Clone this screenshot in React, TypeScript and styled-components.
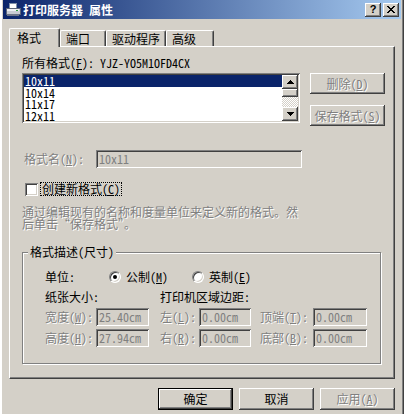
import React from "react";
import styled, { createGlobalStyle, css } from "styled-components";

const FONT = `"Noto Sans Mono CJK SC", "Noto Sans CJK SC", "DejaVu Sans Mono", monospace`;
const FACE = "#d4d0c8";

const GlobalStyle = createGlobalStyle`
  html, body { margin: 0; padding: 0; background: ${FACE}; }
  body { font: 12px/12px ${FONT}; color: #000; }
  * { box-sizing: border-box; }
`;

const raised = css`
  box-shadow: inset -1px -1px #404040, inset 1px 1px #fff, inset -2px -2px #808080;
`;
const sunken = css`
  box-shadow: inset 1px 1px #808080, inset -1px -1px #fff, inset 2px 2px #404040, inset -2px -2px ${FACE};
`;
const disabledText = css`
  color: #808080;
  text-shadow: 1px 1px 0 #fff;
`;

const Window = styled.div`
  width: 404px;
  height: 414px;
  padding: 0 3px;
  display: flex;
  flex-direction: column;
  background: ${FACE};
  box-shadow: inset 2px 0 #fff, inset -1px 0 #404040, inset -2px 0 #808080;
  overflow: hidden;
`;

const TitleBar = styled.div`
  height: 19px;
  display: flex;
  align-items: center;
  padding-left: 2px;
  background: linear-gradient(90deg, #0a246a, #a6caf0);
  color: #fff;
  font-weight: bold;
`;

const TitleText = styled.span`
  margin-left: 2px;
  line-height: 12px;
  white-space: pre;
`;

const CaptionGroup = styled.div`
  margin-left: auto;
  display: flex;
  gap: 2px;
  padding-right: 2px;
`;

const CaptionButton = styled.div`
  width: 16px;
  height: 14px;
  background: ${FACE};
  ${raised};
  display: flex;
  align-items: center;
  justify-content: center;
  color: #000;
  font: bold 11px/11px "Liberation Sans", Arial, sans-serif;
`;

const Body = styled.div`
  flex: 1;
  display: flex;
  flex-direction: column;
  padding: 9px 6px 0 6px;
`;

const TabStrip = styled.div`
  height: 18px;
  display: flex;
  align-items: flex-end;
  position: relative;
  z-index: 1;
`;

const Tab = styled.div<{ $w: number; $active?: boolean }>`
  width: ${(p) => p.$w}px;
  height: ${(p) => (p.$active ? 19 : 16)}px;
  margin-bottom: ${(p) => (p.$active ? -1 : 0)}px;
  padding: ${(p) => (p.$active ? 3 : 2)}px 0 0 ${(p) => (p.$active ? 7 : 5)}px;
  background: ${FACE};
  border-top: 1px solid #fff;
  border-left: 1px solid #fff;
  border-right: 1px solid #404040;
  border-top-left-radius: 2px;
  border-top-right-radius: 2px;
  box-shadow: inset -1px 0 #808080;
  white-space: nowrap;
`;

const Panel = styled.div`
  height: 333px;
  border-top: 1px solid #fff;
  border-left: 1px solid #fff;
  border-right: 1px solid #404040;
  border-bottom: 1px solid #404040;
  box-shadow: inset -1px -1px #808080;
  padding: 10px 0 0 12px;
  display: flex;
  flex-direction: column;
  align-items: flex-start;
`;

const Line = styled.div`
  height: 12px;
  line-height: 12px;
  white-space: pre;
`;

const ListRow = styled.div`
  display: flex;
  align-items: flex-start;
  margin-top: 4px;
`;

const ListBox = styled.div`
  width: 278px;
  height: 50px;
  padding: 2px;
  background: #fff;
  ${sunken};
  display: flex;
`;

const ListItems = styled.div`
  flex: 1;
  display: flex;
  flex-direction: column;
  overflow: hidden;
`;

const ListItem = styled.div<{ $selected?: boolean }>`
  height: 11.5px;
  flex: none;
  line-height: 11.5px;
  padding-left: 1px;
  background: ${(p) => (p.$selected ? "#0a246a" : "transparent")};
  color: ${(p) => (p.$selected ? "#fff" : "#000")};
`;

const ScrollBar = styled.div`
  width: 16px;
  display: flex;
  flex-direction: column;
`;

const ScrollButton = styled.div`
  height: 14px;
  background: ${FACE};
  ${raised};
  display: flex;
  align-items: center;
  justify-content: center;
`;

const ScrollThumb = styled.div`
  height: 8px;
  background: ${FACE};
  ${raised};
`;

const ScrollTrack = styled.div`
  flex: 1;
  background: repeating-conic-gradient(#fff 0 25%, ${FACE} 0 50%) 0 0 / 2px 2px;
`;

const SideButtons = styled.div`
  display: flex;
  flex-direction: column;
  gap: 11px;
  margin-left: 10px;
`;

const Button = styled.div<{ $w?: number; $h?: number; $default?: boolean; $disabled?: boolean }>`
  width: ${(p) => p.$w ?? 75}px;
  height: ${(p) => p.$h ?? 21}px;
  background: ${FACE};
  display: flex;
  align-items: center;
  justify-content: center;
  line-height: 12px;
  white-space: pre;
  ${(p) =>
    p.$default
      ? css`
          box-shadow: inset 0 0 0 1px #000, inset -2px -2px #404040, inset 2px 2px #fff,
            inset -3px -3px #808080;
        `
      : raised};
  ${(p) => p.$disabled && disabledText};
`;

const NameRow = styled.div`
  display: flex;
  align-items: center;
  margin-top: 24px;
`;

const FieldLabel = styled.div<{ $w: number; $ml?: number; $disabled?: boolean }>`
  width: ${(p) => p.$w}px;
  margin-left: ${(p) => p.$ml ?? 0}px;
  line-height: 12px;
  white-space: pre;
  ${(p) => p.$disabled && disabledText};
`;

const Field = styled.div<{ $w: number; $h?: number }>`
  width: ${(p) => p.$w}px;
  height: ${(p) => p.$h ?? 18}px;
  ${sunken};
  background: ${FACE};
  color: #808080;
  padding: 3px 0 0 3px;
  line-height: 12px;
  white-space: pre;
  overflow: hidden;
`;

const CheckRow = styled.div`
  display: flex;
  align-items: center;
  margin-top: 14px;
  padding-left: 3px;
`;

const CheckBox = styled.div`
  width: 13px;
  height: 13px;
  background: #fff;
  ${sunken};
`;

const FocusLabel = styled.div`
  margin-left: 2px;
  padding: 0 1px;
  border: 1px dotted #000;
  line-height: 12px;
  white-space: pre;
`;

const Description = styled.div`
  width: 280px;
  margin-top: 10px;
  line-height: 12px;
  ${disabledText};
`;

const Group = styled.fieldset`
  width: 359px;
  margin: 16px 0 0 0;
  padding: 0;
  min-width: 0;
  border: 1px solid #808080;
  box-shadow: inset 1px 1px #fff, 1px 1px #fff;
`;

const Legend = styled.legend`
  margin-left: 5px;
  padding: 0 2px;
  line-height: 12px;
  height: 12px;
  background: ${FACE};
`;

const GroupBody = styled.div`
  padding: 0 0 16px 22px;
`;

const UnitRow = styled.div`
  display: flex;
  align-items: center;
  height: 12px;
  margin-top: 13px;
`;

const RadioOption = styled.div<{ $w?: number }>`
  width: ${(p) => p.$w ?? 83}px;
  display: flex;
  align-items: center;
  gap: 5px;
  white-space: pre;
`;

const Radio = styled.div<{ $checked?: boolean }>`
  width: 12px;
  height: 12px;
  border-radius: 50%;
  background: #fff;
  border: 1px solid;
  border-color: #808080 #fff #fff #808080;
  box-shadow: inset 1px 1px #404040, inset -1px -1px ${FACE};
  display: flex;
  align-items: center;
  justify-content: center;
  &::after {
    content: "";
    width: 4px;
    height: 4px;
    border-radius: 50%;
    background: ${(p) => (p.$checked ? "#000" : "transparent")};
  }
`;

const SubHeadRow = styled.div`
  display: flex;
  height: 12px;
  margin-top: 8px;
`;

const FieldRow = styled.div<{ $mt: number }>`
  display: flex;
  align-items: center;
  margin-top: ${(p) => p.$mt}px;
`;

const DialogButtons = styled.div`
  display: flex;
  justify-content: flex-end;
  gap: 6px;
  margin-top: 9px;
`;

const PrinterIcon = () => (
  <svg width="16" height="16" viewBox="0 0 16 16" shapeRendering="crispEdges">
    <path d="M5 1h6l1 5H4z" fill="#fff" stroke="#7f8fa8" strokeWidth="1" />
    <path d="M1 6h14v6H1z" fill="#c8ccd4" stroke="#5a6478" strokeWidth="1" />
    <path d="M2 7h12v2H2z" fill="#eef0f4" />
    <path d="M2 12h12v2H2z" fill="#6c7488" />
    <path d="M11 8h2v1h-2z" fill="#30a040" />
  </svg>
);

const CloseGlyph = () => (
  <svg width="8" height="7" viewBox="0 0 8 7" shapeRendering="crispEdges">
    <path d="M0 0h2v1H0zM6 0h2v1H6zM1 1h2v1H1zM5 1h2v1H5zM2 2h4v1H2zM3 3h2v1H3zM2 4h4v1H2zM1 5h2v1H1zM5 5h2v1H5zM0 6h2v1H0zM6 6h2v1H6z" fill="#000" />
  </svg>
);

const Arrow = ({ up }: { up?: boolean }) => (
  <svg width="7" height="4" viewBox="0 0 7 4" shapeRendering="crispEdges">
    {up ? (
      <path d="M3 0h1v1H3zM2 1h3v1H2zM1 2h5v1H1zM0 3h7v1H0z" fill="#000" />
    ) : (
      <path d="M0 0h7v1H0zM1 1h5v1H1zM2 2h3v1H2zM3 3h1v1H3z" fill="#000" />
    )}
  </svg>
);

const fields = [
  [
    { label: "宽度(", key: "W", value: "25.40cm", lw: 51, iw: 53, ml: 0 },
    { label: "左(", key: "L", value: "0.00cm", lw: 39, iw: 52, ml: 11 },
    { label: "顶端(", key: "T", value: "0.00cm", lw: 53, iw: 54, ml: 9 },
  ],
  [
    { label: "高度(", key: "H", value: "27.94cm", lw: 51, iw: 53, ml: 0 },
    { label: "右(", key: "R", value: "0.00cm", lw: 39, iw: 52, ml: 11 },
    { label: "底部(", key: "B", value: "0.00cm", lw: 53, iw: 54, ml: 9 },
  ],
];

export default function App() {
  return (
    <>
      <GlobalStyle />
      <Window>
        <TitleBar>
          <PrinterIcon />
          <TitleText>打印服务器 属性</TitleText>
          <CaptionGroup>
            <CaptionButton>?</CaptionButton>
            <CaptionButton>
              <CloseGlyph />
            </CaptionButton>
          </CaptionGroup>
        </TitleBar>
        <Body>
          <TabStrip>
            <Tab $w={51} $active>
              格式
            </Tab>
            <Tab $w={46}>端口</Tab>
            <Tab $w={60}>驱动程序</Tab>
            <Tab $w={48}>高级</Tab>
          </TabStrip>
          <Panel>
            <Line>
              所有格式(<u>F</u>): YJZ-YO5M1OFD4CX
            </Line>
            <ListRow>
              <ListBox>
                <ListItems>
                  <ListItem $selected>10x11</ListItem>
                  <ListItem>10x14</ListItem>
                  <ListItem>11x17</ListItem>
                  <ListItem>12x11</ListItem>
                </ListItems>
                <ScrollBar>
                  <ScrollButton>
                    <Arrow up />
                  </ScrollButton>
                  <ScrollThumb />
                  <ScrollTrack />
                  <ScrollButton>
                    <Arrow />
                  </ScrollButton>
                </ScrollBar>
              </ListBox>
              <SideButtons>
                <Button $disabled>
                  删除(<u>D</u>)
                </Button>
                <Button $disabled>
                  保存格式(<u>S</u>)
                </Button>
              </SideButtons>
            </ListRow>
            <NameRow>
              <FieldLabel $w={72} $ml={2} $disabled>
                格式名(<u>N</u>):
              </FieldLabel>
              <Field $w={206}>10x11</Field>
            </NameRow>
            <CheckRow>
              <CheckBox />
              <FocusLabel>
                创建新格式(<u>C</u>)
              </FocusLabel>
            </CheckRow>
            <Description>
              通过编辑现有的名称和度量单位来定义新的格式。然后单击“保存格式”。
            </Description>
            <Group>
              <Legend>格式描述(尺寸)</Legend>
              <GroupBody>
                <UnitRow>
                  <FieldLabel $w={64}>单位:</FieldLabel>
                  <RadioOption>
                    <Radio $checked />
                    <span>
                      公制(<u>M</u>)
                    </span>
                  </RadioOption>
                  <RadioOption>
                    <Radio />
                    <span>
                      英制(<u>E</u>)
                    </span>
                  </RadioOption>
                </UnitRow>
                <SubHeadRow>
                  <FieldLabel $w={115}>纸张大小:</FieldLabel>
                  <FieldLabel $w={120}>打印机区域边距:</FieldLabel>
                </SubHeadRow>
                {fields.map((row, i) => (
                  <FieldRow key={i} $mt={i === 0 ? 5 : 3}>
                    {row.map((f) => (
                      <React.Fragment key={f.key}>
                        <FieldLabel $w={f.lw} $ml={f.ml} $disabled>
                          {f.label}
                          <u>{f.key}</u>):
                        </FieldLabel>
                        <Field $w={f.iw}>{f.value}</Field>
                      </React.Fragment>
                    ))}
                  </FieldRow>
                ))}
              </GroupBody>
            </Group>
          </Panel>
          <DialogButtons>
            <Button $h={22} $default>
              确定
            </Button>
            <Button $h={22}>取消</Button>
            <Button $h={22} $disabled>
              应用(<u>A</u>)
            </Button>
          </DialogButtons>
        </Body>
      </Window>
    </>
  );
}
